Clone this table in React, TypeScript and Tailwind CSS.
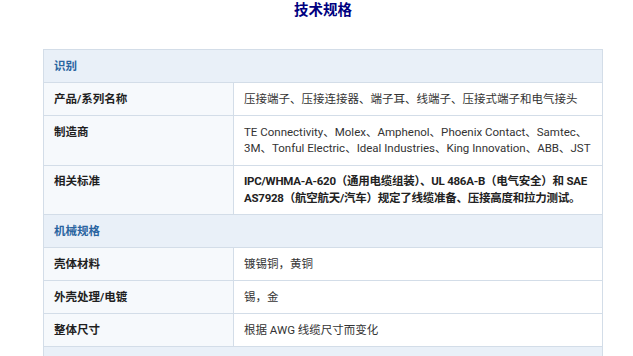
const sections = [
  {
    title: "识别",
    rows: [
      { label: "产品/系列名称", value: "压接端子、压接连接器、端子耳、线端子、压接式端子和电气接头" },
      {
        label: "制造商",
        value:
          "TE Connectivity、Molex、Amphenol、Phoenix Contact、Samtec、3M、Tonful Electric、Ideal Industries、King Innovation、ABB、JST",
      },
      {
        label: "相关标准",
        value:
          "IPC/WHMA-A-620（通用电缆组装）、UL 486A-B（电气安全）和 SAE AS7928（航空航天/汽车）规定了线缆准备、压接高度和拉力测试。",
        strong: true,
      },
    ],
  },
  {
    title: "机械规格",
    rows: [
      { label: "壳体材料", value: "镀锡铜，黄铜" },
      { label: "外壳处理/电镀", value: "锡，金" },
      { label: "整体尺寸", value: "根据 AWG 线缆尺寸而变化" },
    ],
  },
  { title: "电气规格", rows: [] },
];

const App = () => {
  return (
    <div className="bg-white min-h-[356px] pl-[43px] pr-[30px] font-['Roboto','Noto_Sans_CJK_SC',sans-serif]">
      <h2 className="text-center text-[14.5px] leading-[22px] font-bold text-[#000080]">
        技术规格
      </h2>
      <table className="mt-[27px] w-full border-collapse text-[11.5px] leading-[16.5px]">
        <tbody>
          {sections.map((section) => (
            <>
              <tr key={section.title}>
                <th
                  colSpan={2}
                  className="border border-[#d3dde8] bg-[#e9f0f8] px-[10px] py-[7.75px] text-left font-bold text-[#2a64a0]"
                >
                  {section.title}
                </th>
              </tr>
              {section.rows.map((row) => (
                <tr key={row.label}>
                  <th
                    scope="row"
                    className="w-[190px] border border-[#d3dde8] bg-[#f6f9fc] px-[10px] py-[7.75px] text-left align-top font-bold text-[#1f1f1f]"
                  >
                    {row.label}
                  </th>
                  <td
                    className={
                      row.strong
                        ? "border border-[#d3dde8] bg-white px-[10px] py-[7.75px] align-top font-bold tracking-[-0.25px] text-[#222]"
                        : "border border-[#d3dde8] bg-white px-[10px] py-[7.75px] align-top text-[#333]"
                    }
                  >
                    {row.value}
                  </td>
                </tr>
              ))}
            </>
          ))}
        </tbody>
      </table>
    </div>
  );
};
export default App;
